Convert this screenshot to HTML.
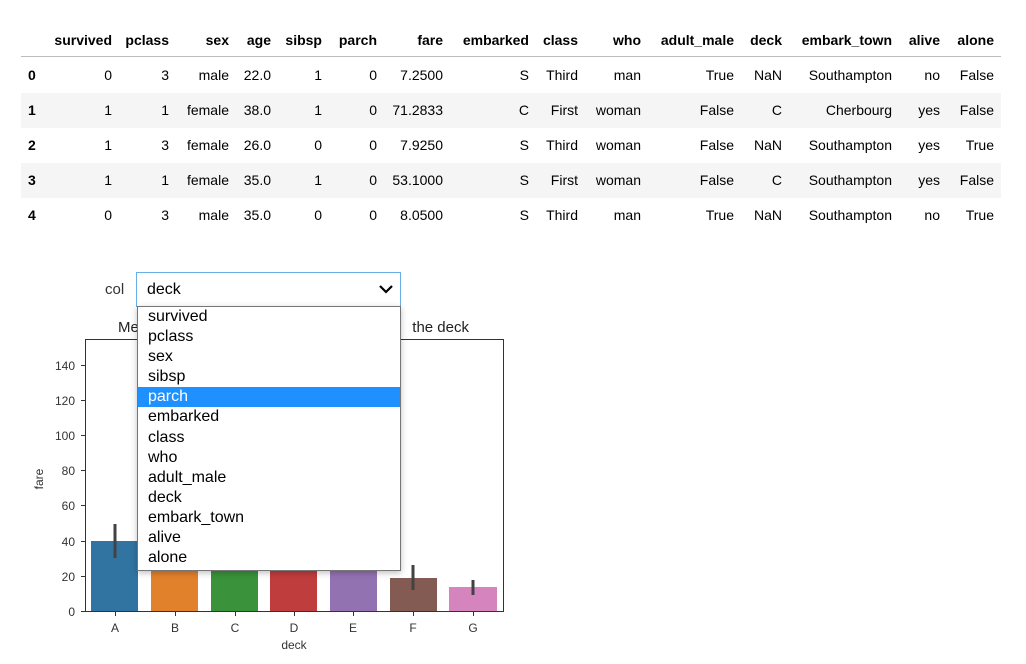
<!DOCTYPE html>
<html><head><meta charset="utf-8"><style>
body{margin:0;width:1026px;height:664px;background:#fff;position:relative;overflow:hidden;font-family:"Liberation Sans",sans-serif;color:#000}
.t{position:absolute;font-size:14px;line-height:16px;white-space:nowrap}
.h{font-weight:bold}
.r{text-align:right;width:200px}
.band{position:absolute;left:21px;width:980px;height:35px;background:#f5f5f5}
</style></head><body>
<div class="band" style="top:93px"></div>
<div class="band" style="top:163px"></div>
<div style="position:absolute;left:21px;top:56px;width:980px;height:1px;background:#bdbdbd"></div>
<div id="tbl"></div>

<svg style="position:absolute;left:0;top:0" width="1026" height="664" font-family="Liberation Sans, sans-serif">
<text x="118" y="332" font-size="15" fill="#222">Mean fare for</text>
<text x="469" y="332" font-size="15" fill="#222" text-anchor="end">the deck</text>
<g>
<rect x="91" y="541" width="47" height="70" fill="#3274a1"/>
<rect x="151" y="545" width="47" height="66" fill="#e1812c"/>
<rect x="211" y="545" width="47" height="66" fill="#3a923a"/>
<rect x="270" y="540" width="47" height="71" fill="#c03d3e"/>
<rect x="330" y="545" width="47" height="66" fill="#9372b2"/>
<rect x="390" y="578" width="47" height="33" fill="#845b53"/>
<rect x="449" y="587" width="48" height="24" fill="#d684bd"/>
<line x1="115" y1="524" x2="115" y2="558" stroke="#424242" stroke-width="3"/>
<line x1="413" y1="565" x2="413" y2="590" stroke="#424242" stroke-width="3"/>
<line x1="473" y1="580" x2="473" y2="595" stroke="#424242" stroke-width="3"/>
</g>
<rect x="85.5" y="339.5" width="418" height="272" fill="none" stroke="#333" stroke-width="1"/>
<g stroke="#333" stroke-width="1">
<line x1="81" y1="365.5" x2="85" y2="365.5"/><line x1="81" y1="400.5" x2="85" y2="400.5"/><line x1="81" y1="435.5" x2="85" y2="435.5"/><line x1="81" y1="470.5" x2="85" y2="470.5"/><line x1="81" y1="505.5" x2="85" y2="505.5"/><line x1="81" y1="541.5" x2="85" y2="541.5"/><line x1="81" y1="576.5" x2="85" y2="576.5"/><line x1="81" y1="611.5" x2="85" y2="611.5"/>
<line x1="115.5" y1="612" x2="115.5" y2="616"/><line x1="175.5" y1="612" x2="175.5" y2="616"/><line x1="235.5" y1="612" x2="235.5" y2="616"/><line x1="294.5" y1="612" x2="294.5" y2="616"/><line x1="353.5" y1="612" x2="353.5" y2="616"/><line x1="413.5" y1="612" x2="413.5" y2="616"/><line x1="473.5" y1="612" x2="473.5" y2="616"/>
</g>
<g font-size="12" fill="#333" text-anchor="end">
<text x="75" y="370">140</text><text x="75" y="405">120</text><text x="75" y="440">100</text><text x="75" y="475">80</text><text x="75" y="510">60</text><text x="75" y="546">40</text><text x="75" y="581">20</text><text x="75" y="616">0</text>
</g>
<g font-size="12" fill="#333" text-anchor="middle">
<text x="115" y="632">A</text><text x="175" y="632">B</text><text x="235" y="632">C</text><text x="294" y="632">D</text><text x="353" y="632">E</text><text x="413" y="632">F</text><text x="473" y="632">G</text>
<text x="294" y="649">deck</text>
<text transform="translate(43,479) rotate(-90)">fare</text>
</g>
</svg>

<div class="t" style="left:105px;top:282px;font-size:15px;color:#333">col</div>
<div style="position:absolute;left:136px;top:272px;width:263px;height:33px;border:1px solid #66afe9;background:#fff"></div>
<div class="t" style="left:147px;top:281px;font-size:16px;line-height:18px">deck</div>
<svg style="position:absolute;left:378px;top:283px" width="16" height="12"><path d="M2 3 L8 9 L14 3" fill="none" stroke="#000" stroke-width="2.2"/></svg>
<div style="position:absolute;left:137px;top:306px;width:262px;height:263px;border:1px solid #767676;background:#fff;box-shadow:0 2px 6px rgba(0,0,0,.25);font-size:16px;line-height:20.1px">
<div style="padding-left:10px">survived</div>
<div style="padding-left:10px">pclass</div>
<div style="padding-left:10px">sex</div>
<div style="padding-left:10px">sibsp</div>
<div style="padding-left:10px;background:#1e90ff;color:#fff">parch</div>
<div style="padding-left:10px">embarked</div>
<div style="padding-left:10px">class</div>
<div style="padding-left:10px">who</div>
<div style="padding-left:10px">adult_male</div>
<div style="padding-left:10px">deck</div>
<div style="padding-left:10px">embark_town</div>
<div style="padding-left:10px">alive</div>
<div style="padding-left:10px">alone</div>
</div>

<script>
var R=[112,169,229,271,322,377,443,529,578,641,734,782,892,940,994];
var H=["survived","pclass","sex","age","sibsp","parch","fare","embarked","class","who","adult_male","deck","embark_town","alive","alone"];
var D=[
["0","3","male","22.0","1","0","7.2500","S","Third","man","True","NaN","Southampton","no","False"],
["1","1","female","38.0","1","0","71.2833","C","First","woman","False","C","Cherbourg","yes","False"],
["1","3","female","26.0","0","0","7.9250","S","Third","woman","False","NaN","Southampton","yes","True"],
["1","1","female","35.0","1","0","53.1000","S","First","woman","False","C","Southampton","yes","False"],
["0","3","male","35.0","0","0","8.0500","S","Third","man","True","NaN","Southampton","no","True"]];
var s="";
function cell(txt,x,y,b){s+='<div class="t r'+(b?' h':'')+'" style="left:'+(x-200)+'px;top:'+y+'px">'+txt+'</div>';}
H.forEach(function(h,i){cell(h,R[i],32,1);});
D.forEach(function(row,j){var y=67+35*j;s+='<div class="t h" style="left:28px;top:'+y+'px">'+j+'</div>';row.forEach(function(v,i){cell(v,R[i],y,0);});});
document.getElementById("tbl").innerHTML=s;
</script>
</body></html>
